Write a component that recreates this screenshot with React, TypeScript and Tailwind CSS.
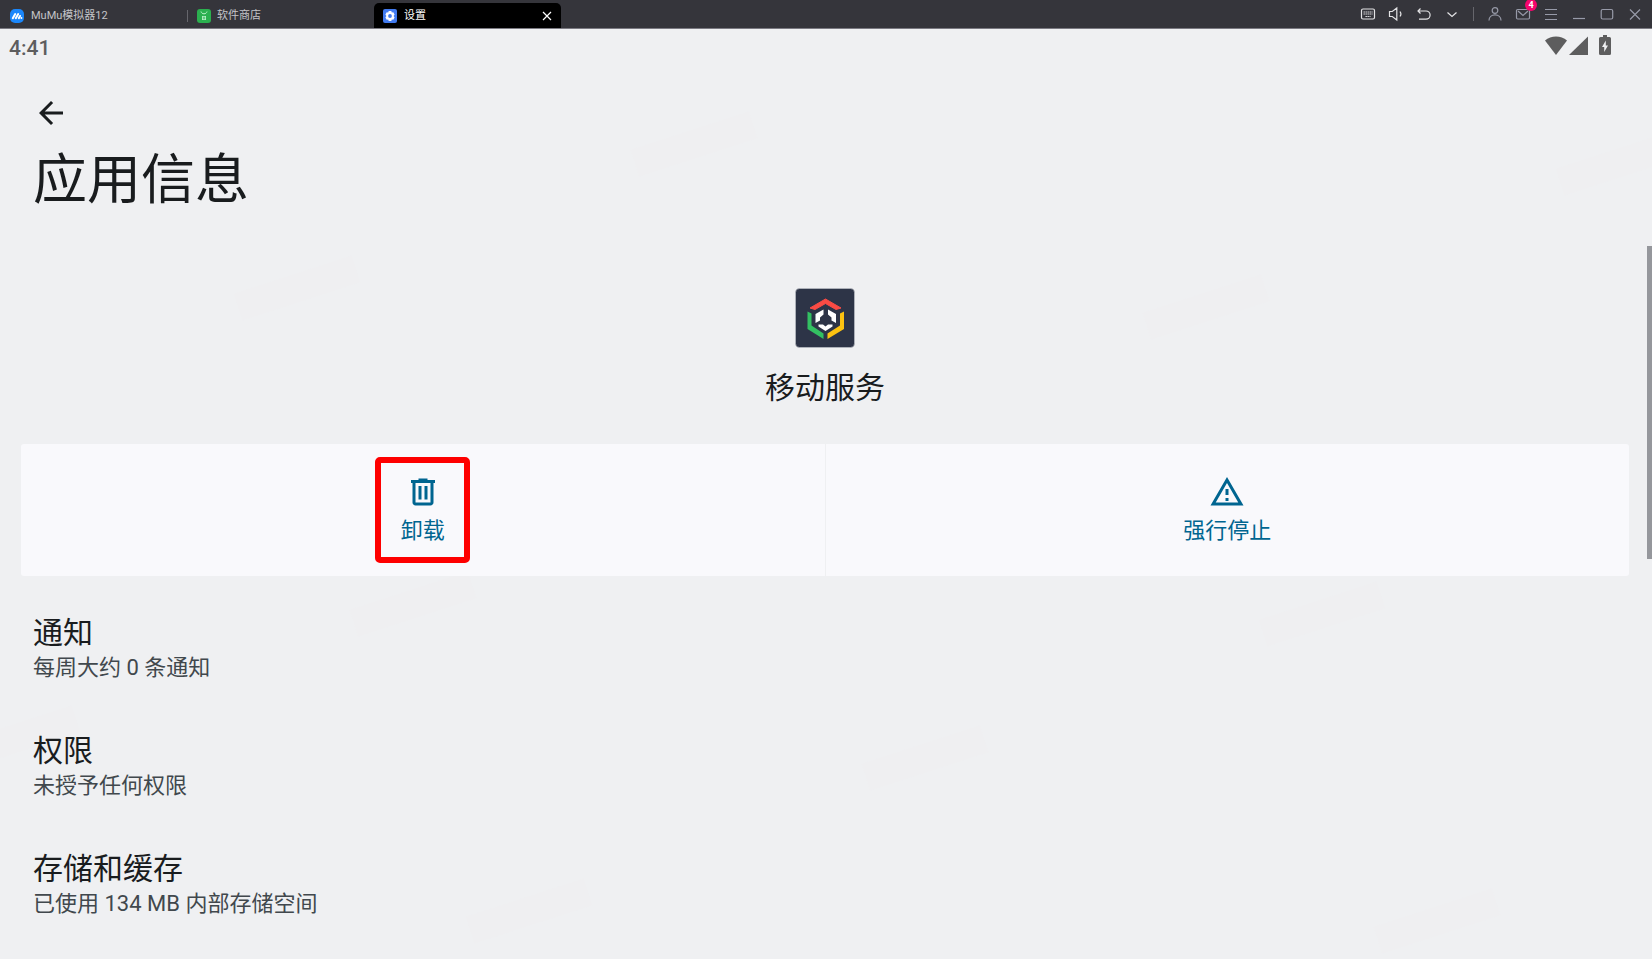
import type { ReactNode } from 'react';

const windowTools = [
  {
    label: '键盘',
    icon: (
      <>
        <rect x="1.5" y="3" width="13" height="10" rx="1.5" />
        <path d="M3.5 6h9M3.5 8h9M5.5 10.5h5" strokeDasharray="1.4 0.6" />
      </>
    ),
  },
  {
    label: '音量',
    icon: <path d="M1.5 5.5v5h2.8L8.8 14V2L4.3 5.500zM12 5.500c1.200 1.600 1.200 3.400 0 5" />,
  },
  {
    label: '返回',
    icon: <path d="M4.500 2.500 2 5l2.500 2.500M2 5h8a4 4 0 0 1 0 8.200H3" />,
  },
  { label: '更多', icon: <path d="m3.5 6.5 4.5 4 4.5-4" /> },
];

const windowControls = [
  {
    label: '账户',
    icon: (
      <>
        <circle cx="8" cy="4.5" r="2.8" />
        <path d="M2 14.5c0-3.4 2.6-5.6 6-5.6s6 2.2 6 5.6" />
      </>
    ),
  },
  {
    label: '消息',
    badge: '4',
    icon: (
      <>
        <rect x="1.5" y="3.5" width="13" height="9.5" rx="1.2" />
        <path d="m3 5 5 4.5L13 5" />
      </>
    ),
  },
  { label: '菜单', icon: <path d="M2 3.5h12M2 8.5h12M2 13.5h12" /> },
  { label: '最小化', icon: <path d="M2 12.5h12" /> },
  { label: '最大化', icon: <rect x="2.2" y="3.5" width="11.5" height="9.5" rx="1.5" /> },
  { label: '关闭', icon: <path d="m3 3.5 10 10M13 3.5l-10 10" /> },
];

const settings = [
  { title: '通知', summary: '每周大约 0 条通知' },
  { title: '权限', summary: '未授予任何权限' },
  { title: '存储和缓存', summary: '已使用 134 MB 内部存储空间' },
];

const watermarks = [
  { x: 18, y: 30 },
  { x: 42, y: 15 },
  { x: 73, y: 32 },
  { x: 98, y: 17 },
  { x: 25, y: 63 },
  { x: 80, y: 64 },
  { x: 56, y: 79 },
  { x: 32, y: 95 },
  { x: 87, y: 96 },
  { x: 1, y: 77 },
];

function ToolButton({ label, badge, children }: { label: string; badge?: string; children: ReactNode }) {
  return (
    <button aria-label={label} className="relative flex h-7 w-7 items-center justify-center">
      <svg viewBox="0 0 16 16" className="h-4 w-4" fill="none" stroke="currentColor" strokeWidth="1.2">
        {children}
      </svg>
      {badge && (
        <span className="absolute -top-px right-0 flex h-3 w-3 items-center justify-center rounded-full bg-[#f6056d] text-[9px] leading-3 font-bold text-white">
          {badge}
        </span>
      )}
    </button>
  );
}

function TitleBar() {
  return (
    <header className="flex h-[29px] items-start border-b border-[#7b7a82] bg-[#35353b] text-[11px] text-[#c4c4c8]">
      <nav className="flex h-7 items-end">
        <button className="flex h-7 w-[187px] items-center gap-[7px] pt-1 pl-[10px]">
          <svg viewBox="0 0 14 14" className="h-[14px] w-[14px]">
            <rect width="14" height="14" rx="5" fill="#1b87fb" />
            <path d="M2.8 9.2 5.2 5M5.8 9.2 8.2 5M8.8 9.2 10 7" stroke="#fff" strokeWidth="2" strokeLinecap="round" />
            <circle cx="11.4" cy="9" r="1" fill="#fff" />
          </svg>
          <span className="pt-px">MuMu模拟器12</span>
        </button>
        <button className="flex h-7 w-[187px] items-center pt-1">
          <span className="mr-[9px] h-3 w-px bg-[#66666c]" />
          <svg viewBox="0 0 14 14" className="mr-[6px] h-[14px] w-[14px]">
            <rect width="14" height="14" rx="3" fill="#2bb04f" />
            <path d="M4 2.5C4.3 4 5.5 4.8 7 4.8S9.7 4 10 2.5" stroke="#b9f0c6" fill="none" />
            <path d="M5 7.5h4M5 9h4M5 10.5h4M5.5 7v4M8.5 7v4" stroke="#b9f0c6" strokeWidth="0.8" />
          </svg>
          <span className="pt-px">软件商店</span>
        </button>
        <div className="flex h-[25px] w-[187px] items-center rounded-t-[5px] bg-black pr-2 pl-[9px] text-white">
          <svg viewBox="0 0 14 14" className="mr-[7px] h-[14px] w-[14px]">
            <rect width="14" height="14" rx="2" fill="#427bf0" />
            <path
              d="M5.700 2h2.600l.5 1.500 1.500-.3 1.300 2.200L10.600 7l1 1.600-1.300 2.200-1.500-.3-.5 1.500H5.700l-.5-1.500-1.500.3-1.300-2.200L3.400 7l-1-1.600 1.300-2.200 1.500.3z"
              fill="#fff"
            />
            <circle cx="7" cy="7" r="1.9" fill="#427bf0" />
          </svg>
          <span className="grow pt-px">设置</span>
          <button aria-label="关闭标签页">
            <svg viewBox="0 0 12 12" className="h-3 w-3" stroke="currentColor" strokeWidth="1.2">
              <path d="m2 2 8 8M10 2l-8 8" />
            </svg>
          </button>
        </div>
      </nav>
      <div className="ml-auto flex items-center pr-[3px]">
        <div className="flex text-[#e4e4e6]">
          {windowTools.map((tool) => (
            <ToolButton key={tool.label} label={tool.label}>
              {tool.icon}
            </ToolButton>
          ))}
        </div>
        <span className="mx-[7px] h-[14px] w-px bg-[#66666c]" />
        <div className="flex text-[#979aa8]">
          {windowControls.map((control) => (
            <ToolButton key={control.label} label={control.label} badge={control.badge}>
              {control.icon}
            </ToolButton>
          ))}
        </div>
      </div>
    </header>
  );
}

function StatusBar() {
  return (
    <div className="flex h-9 items-start justify-between pr-[41px] pl-[9px] text-[#5d5d5e]">
      <time className="text-[21px] leading-[38px] font-medium">4:41</time>
      <div className="flex items-start pt-[6px]">
        <svg viewBox="0 0 22 20" className="mr-[2px] h-5 w-[22px]" fill="currentColor">
          <path d="M11 20 0 5.5C3 2.8 7 1.5 11 1.5s8 1.3 11 4z" />
        </svg>
        <svg viewBox="0 0 19 20" className="mr-[11px] h-5 w-[19px]" fill="currentColor">
          <path d="M19 1.5V20H0z" />
        </svg>
        <svg viewBox="0 0 12 20" className="h-5 w-3" fill="currentColor" fillRule="evenodd">
          <path d="M4 0h4v2h2.5A1.5 1.5 0 0 1 12 3.5v15a1.5 1.5 0 0 1-1.5 1.5h-9A1.5 1.5 0 0 1 0 18.500v-15A1.500 1.500 0 0 1 1.500 2H4zM6.800 5.500 3 12h2.200v5L9 10.500H6.800z" />
        </svg>
      </div>
    </div>
  );
}

function AppLogo() {
  return (
    <svg viewBox="0 0 60 60" className="h-[60px] w-[60px]">
      <rect x="0.5" y="0.5" width="59" height="59" rx="4" fill="#2d3447" stroke="#c3c6cd" strokeWidth="0.6" />
      <path d="M15 20 30.500 11 46 20l-5 1.500-10.500-6-10.500 6z" fill="#fa4b44" stroke="#fa4b44" />
      <path d="M12.500 23.500 16.500 25.500V37.500l12 8v5.500L12.500 41z" fill="#33c062" />
      <path d="M49 23.500 45 25.500V37.500l-12.500 8v5.500L49 41z" fill="#fcc211" />
      <path d="m28.500 21.500-8 4.500v9l4.500-2.500v-3l3.500-3zM33 21.500l8 4.500v9l-4.500-2.500v-3l-3.500-3z" fill="#fff" />
      <path d="m23.500 36.500 4.500 0 2.500 2 2.500-2 4.500 0v2l-7 4.500-7-4.500z" fill="#fff" />
    </svg>
  );
}

export default function App() {
  return (
    <div
      lang="zh-CN"
      className="relative isolate flex min-h-screen flex-col overflow-hidden bg-[#eff0f2] font-[Roboto,'Noto_Sans_CJK_SC',sans-serif] text-[#191c1e]"
    >
      {watermarks.map((mark) => (
        <span
          key={`${mark.x}-${mark.y}`}
          className="absolute -z-10 h-7 w-[124px] -translate-x-1/2 -translate-y-1/2 -rotate-18 bg-[#efeff1]"
          style={{ left: `${mark.x}%`, top: `${mark.y}%` }}
        />
      ))}

      <TitleBar />
      <StatusBar />

      <main className="pt-[30px] pr-[23px] pl-[21px]">
        <div className="px-3">
          <button aria-label="返回" className="block">
            <svg viewBox="0 0 24 24" className="h-9 w-9" fill="currentColor">
              <path d="M20 11H7.83l5.59-5.59L12 4l-8 8 8 8 1.41-1.41L7.83 13H20z" />
            </svg>
          </button>
          <h1 className="mt-[10px] text-[54px] leading-[80px]">应用信息</h1>
        </div>

        <section className="mt-[67px] flex flex-col items-center">
          <AppLogo />
          <h2 className="mt-[18px] text-[30px] leading-[44px]">移动服务</h2>
        </section>

        <div className="mt-[34px] grid grid-cols-2 gap-px text-[#006590]">
          <button className="flex h-[132px] items-center justify-center rounded-l-[3px] bg-[#f9f9fc]">
            <span className="flex h-[106px] w-[95px] flex-col items-center rounded-[5px] border-6 border-[#fe0000] pt-[11px]">
              <svg viewBox="0 0 24 24" className="h-9 w-9" fill="currentColor">
                <path d="M15 4V3H9v1H4v2h1v13c0 1.100.9 2 2 2h10c1.100 0 2-.9 2-2V6h1V4h-5zm2 15H7V6h10v13zM9 8h2v9H9V8zm4 0h2v9h-2V8z" />
              </svg>
              <span className="mt-[5px] text-[22px] leading-8">卸载</span>
            </span>
          </button>
          <button className="flex h-[132px] flex-col items-center rounded-r-[3px] bg-[#f9f9fc] pt-[30px]">
            <svg viewBox="0 0 24 24" className="h-9 w-9" fill="currentColor">
              <path d="M12 5.990 19.530 19H4.470L12 5.990M12 2 1 21h22L12 2zm1 14h-2v2h2v-2zm0-6h-2v4h2v-4z" />
            </svg>
            <span className="mt-[5px] text-[22px] leading-8">强行停止</span>
          </button>
        </div>

        <ul className="mt-[13px] px-3">
          {settings.map((item) => (
            <li key={item.title}>
              <a href="#" className="block py-6">
                <span className="block text-[30px] leading-10">{item.title}</span>
                <span className="block text-[22px] leading-[30px] text-[#41484d]">{item.summary}</span>
              </a>
            </li>
          ))}
        </ul>
      </main>

      {/* scroll thumb */}
      <div className="absolute top-[246px] right-0 h-[313px] w-[5px] bg-[#95979c]" />
    </div>
  );
}
